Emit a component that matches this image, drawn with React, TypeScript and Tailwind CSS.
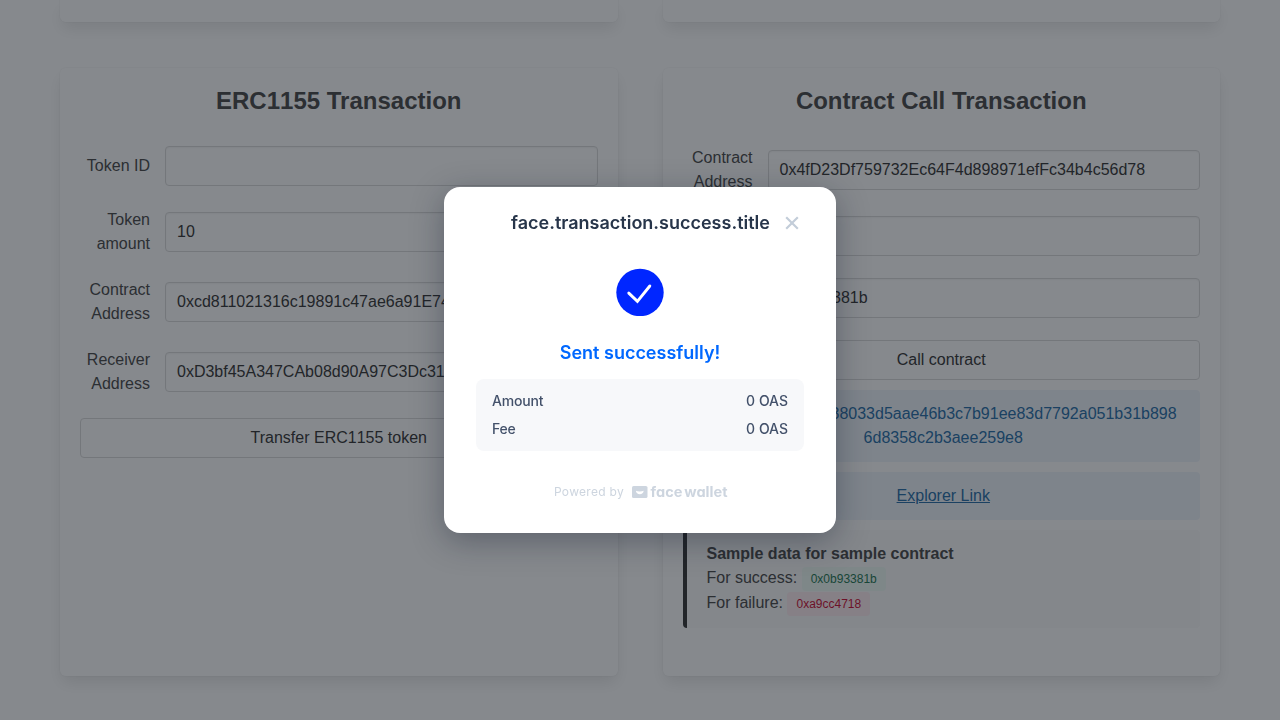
import type { ReactNode } from 'react';

const cardShadow =
  'shadow-[0_8px_16px_-2px_rgba(10,10,10,0.1),0_0_0_1px_rgba(10,10,10,0.02)]';

function Card({ title, children }: { title: ReactNode; children: ReactNode }) {
  return (
    <section className={`h-[608px] flex-1 rounded-md bg-white px-5 pt-[19px] ${cardShadow}`}>
      <h2 className="mb-8 text-center text-2xl leading-[27px] font-bold text-[#4a4a4a]">{title}</h2>
      {children}
    </section>
  );
}

function TokenStandard() {
  return <span className="[font-kerning:none]">ERC1155</span>;
}

function Field({ label, value }: { label: string; value: string }) {
  return (
    <div className="flex items-center gap-[15px]">
      <label className="w-[70px] shrink-0 text-right">{label}</label>
      <div className="flex h-10 min-w-0 flex-1 items-center rounded border border-[#dbdbdb] px-[11px] whitespace-nowrap text-[#363636] shadow-[inset_0_1px_2px_rgba(10,10,10,0.05)]">
        {value}
      </div>
    </div>
  );
}

function ActionButton({ children }: { children: ReactNode }) {
  return (
    <button className="flex h-10 w-full items-center justify-center rounded border border-[#dbdbdb] text-[#363636]">
      <span>{children}</span>
    </button>
  );
}

function InfoMessage({ children }: { children: ReactNode }) {
  return (
    <div className="rounded border-l-4 border-[#3298dc] bg-[#eff5fb] px-5 py-3 text-center text-[#296fa8]">
      {children}
    </div>
  );
}

function Modal() {
  return (
    <div className="flex h-[346px] w-[392px] flex-col rounded-2xl bg-white px-8 font-['Inter',sans-serif] shadow-[0_8px_32px_rgba(15,23,42,0.35)] will-change-transform">
      <header className="grid h-[72px] shrink-0 grid-cols-[24px_1fr_24px] items-center">
        <span />
        <h1 className="-mr-px text-center text-lg leading-7 font-semibold whitespace-nowrap text-[#27354a]">face.transaction.success.title</h1>
        <button className="flex justify-center" aria-label="Close">
          <svg width="24" height="24" viewBox="0 0 24 24" fill="none" stroke="#c3cdd9" strokeWidth="2.2">
            <path d="M6.2 6.2 17.8 17.8M17.8 6.2 6.2 17.8" />
          </svg>
        </button>
      </header>
      <div className="mt-[9px] flex justify-center">
        <svg width="48" height="48" viewBox="0 0 48 48" fill="none">
          <circle cx="24" cy="24.5" r="23.7" fill="#0026ff" />
          <path d="m12.8 25.1 8.6 8.2 12.4-15.3" stroke="#fff" strokeWidth="2.9" strokeLinecap="round" />
        </svg>
      </div>
      <p className="mt-[23px] text-center text-lg leading-7 font-semibold text-[#0068ff]">Sent successfully!</p>
      <dl className="mt-3 flex h-[72px] shrink-0 flex-col gap-2 rounded-lg bg-[#f7f8fa] px-4 py-3 text-sm leading-5 font-medium text-[#43516a]">
        <div className="flex justify-between">
          <dt className="tracking-[-0.2px]">Amount</dt>
          <dd>0 OAS</dd>
        </div>
        <div className="flex justify-between">
          <dt className="tracking-[-0.2px]">Fee</dt>
          <dd>0 OAS</dd>
        </div>
      </dl>
      <footer className="mt-8 flex items-center justify-center gap-2 pl-0.5 text-xs leading-[18px] text-[#cdd5df]">
        <span className="tracking-[0.3px]">Powered by</span>
        <svg width="96" height="18" viewBox="0 0 96 18" fill="#cdd5df">
          <rect y="3" width="15.5" height="12" rx="1.6" />
          <path d="M3.9 7.800c1 .5 2.300.8 3.900.8s2.900-.3 3.900-.8c-.2 2-1.800 3.500-3.900 3.500S4.100 9.800 3.900 7.800Z" fill="#fff" />
          <text
            x="18.5"
            y="14.2"
            textLength="77"
            lengthAdjust="spacingAndGlyphs"
            wordSpacing="-1.5"
            className="font-['Inter',sans-serif] text-[14px] font-bold [font-feature-settings:'cv11']"
          >
            face wallet
          </text>
        </svg>
      </footer>
    </div>
  );
}

export default function App() {
  return (
    <div className="relative h-[720px] w-[1280px] overflow-hidden bg-white font-['Liberation_Sans',sans-serif] text-base leading-6 text-[#4a4a4a]">
      <main className="flex flex-col gap-[46px] px-[60px]">
        <div className="flex gap-[45px]">
          <div className={`h-[22px] flex-1 rounded-b-md bg-white ${cardShadow}`} />
          <div className={`h-[22px] flex-1 rounded-b-md bg-white ${cardShadow}`} />
        </div>
        <div className="flex gap-[45px]">
          <Card title={<><TokenStandard /> Transaction</>}>
            <div className="flex flex-col gap-[22px]">
              <Field label="Token ID" value="" />
              <Field label="Token amount" value="10" />
              <Field label="Contract Address" value="0xcd811021316c19891c47ae6a91E74" />
              <Field label="Receiver Address" value="0xD3bf45A347CAb08d90A97C3Dc31" />
              <ActionButton>Transfer <TokenStandard /> token</ActionButton>
            </div>
          </Card>
          <Card title="Contract Call Transaction">
            <div className="flex flex-col gap-[22px]">
              <Field label="Contract Address" value="0x4fD23Df759732Ec64F4d898971efFc34b4c56d78" />
              <Field label="Amount" value="" />
              <Field label="Data" value="0x0b93381b" />
              <ActionButton>Call contract</ActionButton>
            </div>
            <div className="mt-2.5 flex flex-col gap-2.5">
              <InfoMessage>
                <p className="whitespace-nowrap"><span className="mr-[5px]">Hash:</span> 0x1c4e9a38033d5aae46b3c7b91ee83d7792a051b31b898</p>
                <p>6d8358c2b3aee259e8</p>
              </InfoMessage>
              <InfoMessage>
                <a className="underline">Explorer Link</a>
              </InfoMessage>
              <div className="rounded border-l-4 border-[#363636] bg-[#fafafa] px-5 py-3">
                <p className="font-bold">Sample data for sample contract</p>
                <p className="flex h-[25px] items-start gap-1">
                  For success:
                  <span className="mt-px ml-[0.5px] flex h-6 items-center rounded bg-[#effaf5] px-[9px] text-xs text-[#257953]">0x0b93381b</span>
                </p>
                <p className="flex h-[25px] items-start gap-1">
                  For failure:
                  <span className="mt-px ml-[0.5px] flex h-6 items-center rounded bg-[#feecf0] px-[9px] text-xs text-[#cc0f35]">0xa9cc4718</span>
                </p>
              </div>
            </div>
          </Card>
        </div>
      </main>
      <div className="absolute inset-0 flex items-center justify-center bg-[rgba(13,20,28,0.5)]">
        <Modal />
      </div>
    </div>
  );
}
